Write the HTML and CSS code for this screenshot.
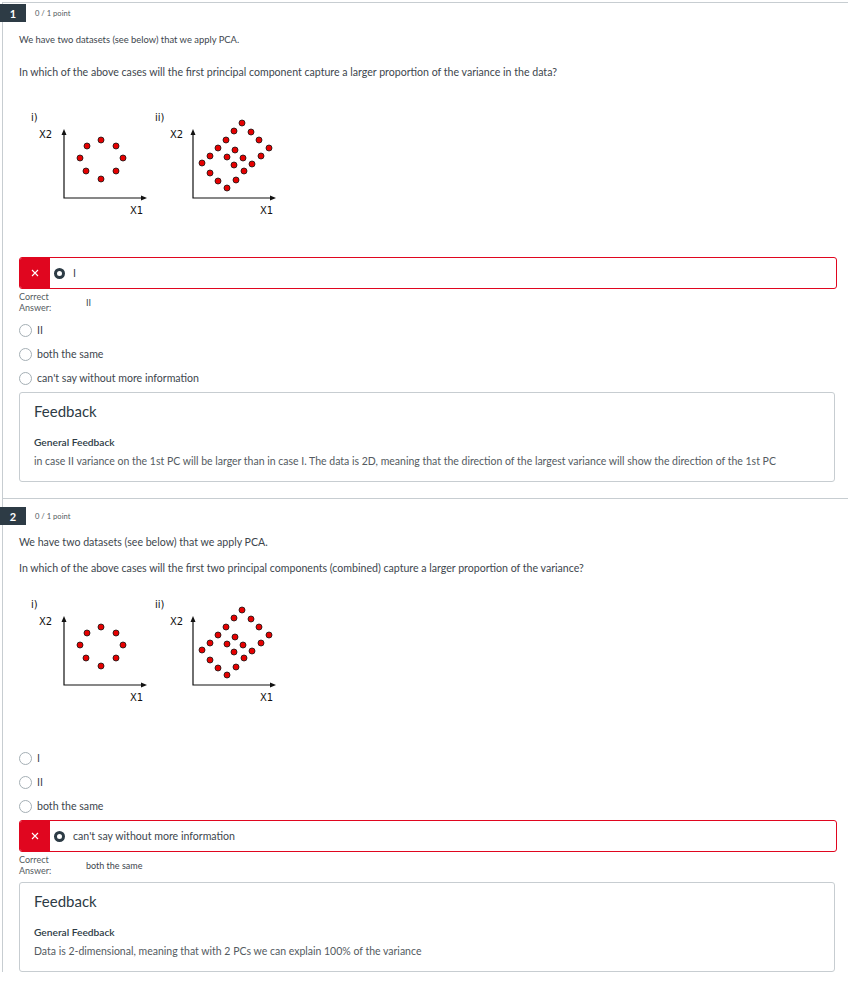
FILE: index.html
```html
<!DOCTYPE html>
<html lang="en">
<head>
<meta charset="utf-8">
<title>Quiz results</title>
<link rel="stylesheet" href="styles.css">
</head>
<body>
<div class="quiz">

  <section class="question q-first">
    <div class="q-head">
      <span class="q-num">1</span>
      <span class="q-points">0 / 1 point</span>
    </div>
    <div class="q-body">
      <p class="q-text t1">We have two datasets (see below) that we apply PCA.</p>
      <p class="q-text t2">In which of the above cases will the first principal component capture a larger proportion of the variance in the data?</p>
      <svg class="figure" width="260" height="112" viewBox="0 0 260 112">
        <g class="plot-text">
          <text x="3" y="13">i)</text>
          <text x="11" y="30">X2</text>
          <text x="102" y="106">X1</text>
          <text x="127" y="13">ii)</text>
          <text x="142" y="30">X2</text>
          <text x="232" y="106">X1</text>
        </g>
        <g class="axis">
          <path d="M36 26 V90 H114"/>
          <path d="M165 26 V90 H243"/>
        </g>
        <g class="arrow">
          <path d="M36 21 L33.5 27 L38.5 27 Z"/>
          <path d="M119 90 L113 87.5 L113 92.5 Z"/>
          <path d="M165 21 L162.5 27 L167.5 27 Z"/>
          <path d="M248 90 L242 87.5 L242 92.5 Z"/>
        </g>
        <g class="dots">
          <circle cx="59" cy="38" r="3"/><circle cx="73" cy="32" r="3"/><circle cx="88" cy="38" r="3"/>
          <circle cx="52" cy="50" r="3"/><circle cx="95" cy="50" r="3"/><circle cx="58" cy="63" r="3"/>
          <circle cx="88" cy="63" r="3"/><circle cx="73" cy="71" r="3"/>
          <circle cx="214" cy="15" r="3"/><circle cx="206" cy="23" r="3"/><circle cx="223" cy="24" r="3"/>
          <circle cx="198" cy="32" r="3"/><circle cx="231" cy="32" r="3"/><circle cx="190" cy="40" r="3"/>
          <circle cx="207" cy="42" r="3"/><circle cx="241" cy="40" r="3"/><circle cx="182" cy="48" r="3"/>
          <circle cx="199" cy="49" r="3"/><circle cx="215" cy="50" r="3"/><circle cx="233" cy="48" r="3"/>
          <circle cx="174" cy="55" r="3"/><circle cx="206" cy="57" r="3"/><circle cx="224" cy="56" r="3"/>
          <circle cx="182" cy="65" r="3"/><circle cx="216" cy="63" r="3"/><circle cx="190" cy="73" r="3"/>
          <circle cx="208" cy="72" r="3"/><circle cx="199" cy="80" r="3"/>
        </g>
      </svg>

      <div class="answers a-first">
        <div class="answer wrong">
          <span class="wrong-mark"><svg width="8" height="8" viewBox="0 0 8 8"><path d="M1 1 L7 7 M7 1 L1 7"/></svg></span>
          <span class="radio checked"></span>
          <span class="a-label">I</span>
        </div>
        <div class="correct">
          <span class="c-label">Correct<br>Answer:</span>
          <span class="c-value">II</span>
        </div>
        <div class="answer first-row"><span class="radio"></span><span class="a-label">II</span></div>
        <div class="answer"><span class="radio"></span><span class="a-label">both the same</span></div>
        <div class="answer"><span class="radio"></span><span class="a-label">can't say without more information</span></div>
      </div>

      <div class="feedback fb-first">
        <h3 class="fb-title">Feedback</h3>
        <h4 class="fb-sub">General Feedback</h4>
        <p class="fb-text">in case II variance on the 1st PC will be larger than in case I. The data is 2D, meaning that the direction of the largest variance will show the direction of the 1st PC</p>
      </div>
    </div>
  </section>

  <section class="question q-second">
    <div class="q-head">
      <span class="q-num">2</span>
      <span class="q-points">0 / 1 point</span>
    </div>
    <div class="q-body">
      <p class="q-text t1">We have two datasets (see below) that we apply PCA.</p>
      <p class="q-text t2">In which of the above cases will the first two principal components (combined) capture a larger proportion of the variance?</p>
      <svg class="figure" width="260" height="112" viewBox="0 0 260 112">
        <g class="plot-text">
          <text x="3" y="13">i)</text>
          <text x="11" y="30">X2</text>
          <text x="102" y="106">X1</text>
          <text x="127" y="13">ii)</text>
          <text x="142" y="30">X2</text>
          <text x="232" y="106">X1</text>
        </g>
        <g class="axis">
          <path d="M36 26 V90 H114"/>
          <path d="M165 26 V90 H243"/>
        </g>
        <g class="arrow">
          <path d="M36 21 L33.5 27 L38.5 27 Z"/>
          <path d="M119 90 L113 87.5 L113 92.5 Z"/>
          <path d="M165 21 L162.5 27 L167.5 27 Z"/>
          <path d="M248 90 L242 87.5 L242 92.5 Z"/>
        </g>
        <g class="dots">
          <circle cx="59" cy="38" r="3"/><circle cx="73" cy="32" r="3"/><circle cx="88" cy="38" r="3"/>
          <circle cx="52" cy="50" r="3"/><circle cx="95" cy="50" r="3"/><circle cx="58" cy="63" r="3"/>
          <circle cx="88" cy="63" r="3"/><circle cx="73" cy="71" r="3"/>
          <circle cx="214" cy="15" r="3"/><circle cx="206" cy="23" r="3"/><circle cx="223" cy="24" r="3"/>
          <circle cx="198" cy="32" r="3"/><circle cx="231" cy="32" r="3"/><circle cx="190" cy="40" r="3"/>
          <circle cx="207" cy="42" r="3"/><circle cx="241" cy="40" r="3"/><circle cx="182" cy="48" r="3"/>
          <circle cx="199" cy="49" r="3"/><circle cx="215" cy="50" r="3"/><circle cx="233" cy="48" r="3"/>
          <circle cx="174" cy="55" r="3"/><circle cx="206" cy="57" r="3"/><circle cx="224" cy="56" r="3"/>
          <circle cx="182" cy="65" r="3"/><circle cx="216" cy="63" r="3"/><circle cx="190" cy="73" r="3"/>
          <circle cx="208" cy="72" r="3"/><circle cx="199" cy="80" r="3"/>
        </g>
      </svg>

      <div class="answers a-second">
        <div class="answer first-row"><span class="radio"></span><span class="a-label">I</span></div>
        <div class="answer"><span class="radio"></span><span class="a-label">II</span></div>
        <div class="answer"><span class="radio"></span><span class="a-label">both the same</span></div>
        <div class="answer wrong">
          <span class="wrong-mark"><svg width="8" height="8" viewBox="0 0 8 8"><path d="M1 1 L7 7 M7 1 L1 7"/></svg></span>
          <span class="radio checked"></span>
          <span class="a-label">can't say without more information</span>
        </div>
        <div class="correct">
          <span class="c-label">Correct<br>Answer:</span>
          <span class="c-value">both the same</span>
        </div>
      </div>

      <div class="feedback fb-second">
        <h3 class="fb-title">Feedback</h3>
        <h4 class="fb-sub">General Feedback</h4>
        <p class="fb-text">Data is 2-dimensional, meaning that with 2 PCs we can explain 100% of the variance</p>
      </div>
    </div>
  </section>

</div>
</body>
</html>
```

FILE: styles.css
```css
* { box-sizing: border-box; }

html, body {
  margin: 0;
  padding: 0;
  background: #ffffff;
}

body {
  font-family: Lato, "Open Sans", "Liberation Sans", sans-serif;
  color: #2d3b45;
  width: 848px;
  height: 984px;
  overflow: hidden;
}

.quiz {
  padding-top: 2px;
}

.question {
  margin-left: 2px;
  border-top: 1px solid #c7cdd1;
  border-left: 1px solid #c7cdd1;
}

.q-head {
  display: flex;
  align-items: center;
  margin-left: -3px;
  height: 18px;
}

.q-first .q-head { margin-top: 1px; }
.q-second .q-head { margin-top: 8px; }

.q-num {
  width: 26px;
  height: 18px;
  background: #2d3b45;
  color: #ffffff;
  font-size: 11px;
  font-weight: 700;
  display: flex;
  align-items: center;
  justify-content: center;
}

.q-points {
  margin-left: 9px;
  font-size: 7.6px;
  color: #545b61;
}

.q-body {
  padding-left: 16px;
  padding-right: 11px;
}

.q-text {
  margin: 0;
  font-size: 10.6px;
  line-height: 14px;
  color: #3d464d;
}

.q-first .t1 { margin-top: 11px; font-size: 9.4px; }
.q-first .t2 { margin-top: 18px; }
.q-second .t1 { margin-top: 10px; }
.q-second .t2 { margin-top: 12px; }

.figure {
  display: block;
  margin-left: 9px;
}
.q-first .figure { margin-top: 29px; }
.q-second .figure { margin-top: 20px; }

.plot-text text {
  font-family: "DejaVu Sans", sans-serif;
  font-size: 10px;
  fill: #111111;
}

.axis path {
  fill: none;
  stroke: #111111;
  stroke-width: 1.2;
}

.arrow path {
  fill: #111111;
}

.dots circle {
  fill: #e60000;
  stroke: #111111;
  stroke-width: 0.8;
}

.answers {
  display: flex;
  flex-direction: column;
}
.a-first { margin-top: 37px; }
.a-second { margin-top: 39px; }

.answer {
  display: flex;
  align-items: center;
  height: 24px;
  font-size: 10.6px;
  color: #3d464d;
}

.a-first .first-row { margin-top: 5px; }

.radio {
  width: 13px;
  height: 13px;
  border: 1px solid #a5afb5;
  border-radius: 50%;
  flex: none;
  margin-right: 5px;
  background: #ffffff;
}

.radio.checked {
  width: 11px;
  height: 11px;
  border: 3px solid #2d3b45;
  margin-left: 4px;
  margin-right: 8px;
}

.answer.wrong {
  height: 32px;
  border: 1px solid #e0061f;
  border-radius: 3px;
  overflow: hidden;
  margin-right: 0;
}

.a-second .answer.wrong { margin-top: 2px; }

.wrong-mark {
  align-self: stretch;
  width: 31px;
  background: #e0061f;
  display: flex;
  align-items: center;
  justify-content: center;
  margin-left: -1px;
}

.wrong-mark path {
  stroke: #ffffff;
  stroke-width: 1.1;
  fill: none;
}

.correct {
  display: flex;
  align-items: center;
  margin-top: 2px;
}

.c-label {
  width: 67px;
  font-size: 9px;
  line-height: 11px;
  color: #545b61;
}

.c-value {
  font-size: 9px;
  color: #3d464d;
}

.feedback {
  border: 1px solid #c7cdd1;
  border-radius: 3px;
  padding: 9px 14px 13px 14px;
  margin-right: 2px;
}
.fb-first { margin-top: 2px; }
.fb-second { margin-top: 6px; }

.fb-title {
  margin: 0;
  font-size: 15px;
  line-height: 18px;
  font-weight: 400;
  color: #2d3b45;
}

.fb-sub {
  margin: 16px 0 0 0;
  font-size: 10.2px;
  line-height: 13px;
  font-weight: 600;
  color: #2d3b45;
}

.fb-text {
  margin: 6px 0 0 0;
  font-size: 10.5px;
  line-height: 13px;
  color: #545b61;
}

.q-first { padding-bottom: 16px; }
```
